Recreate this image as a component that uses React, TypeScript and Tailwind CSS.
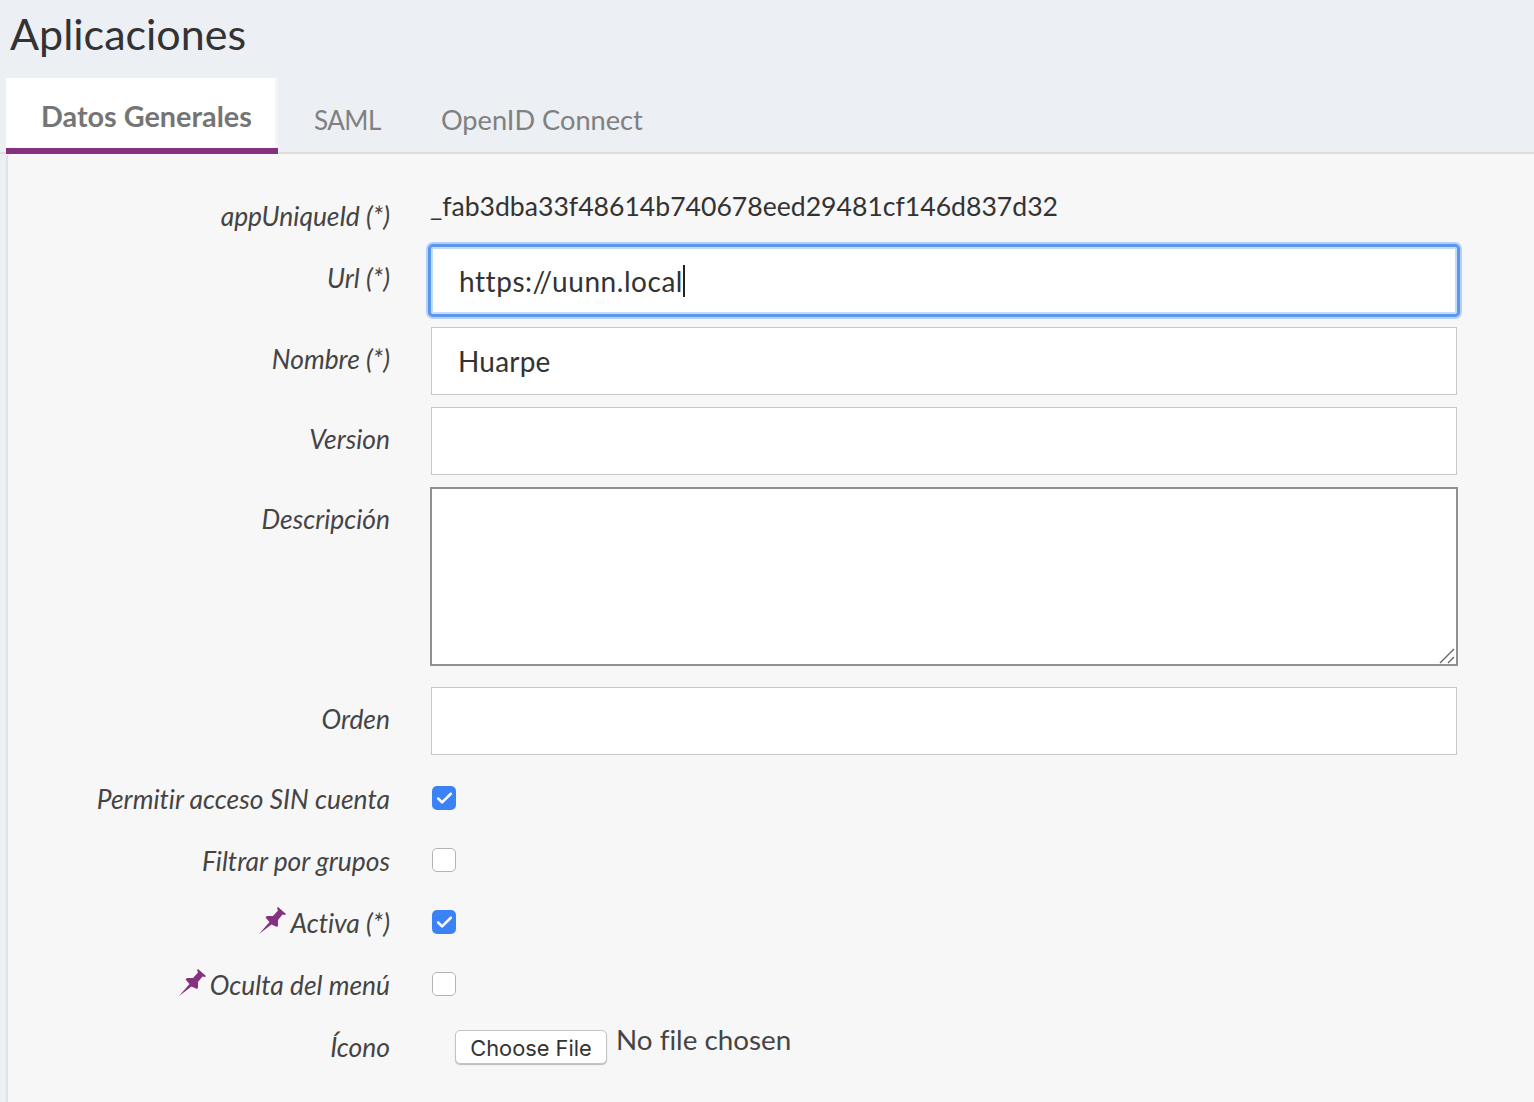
import React from 'react';
import { Check } from 'lucide-react';

const labelClass = "w-[390px] shrink-0 text-right italic text-[26.4px] leading-[32px] text-[#444]";
const inputClass = "w-[1026px] h-[68px] bg-white border border-[#c8c8c8] px-[26px] text-[28px] tracking-[0.2px] text-[#333] outline-none";

const PinIcon = () => (
  <svg viewBox="0 0 27 27" className="w-[27px] h-[27px] mr-[4px] shrink-0" fill="#84317f">
    <path d="M0 27 L10.5 15 L6.5 10.5 L8 9 L14 9 L19 3.5 L18 1 L19 0 L27 7 L26 8 L23.5 7.5 L19 13 L19 18.5 L18 20 L12.5 17.5 Z" />
  </svg>
);

const CheckBox = ({ checked }: { checked: boolean }) => (
  checked ? (
    <div className="w-[24px] h-[24px] rounded-[5px] bg-[#3b82f6] flex items-center justify-center">
      <Check className="w-[19px] h-[19px] text-white" strokeWidth={3.2} />
    </div>
  ) : (
    <div className="w-[24px] h-[24px] rounded-[5px] bg-white border border-[#b4b4b4]" />
  )
);

const Row = ({ label, pin, className, labelTop, children }: { label: string; pin?: boolean; className?: string; labelTop: string; children: React.ReactNode }) => (
  <div className={`flex ${className || ''}`}>
    <div className={`${labelClass} ${labelTop} flex justify-end items-start`}>
      {pin && <PinIcon />}
      <span>{label}</span>
    </div>
    <div className="ml-[41px]">{children}</div>
  </div>
);

export default function App() {
  return (
    <div className="w-[1534px] h-[1102px] overflow-hidden bg-[#eceff4] font-['Lato','Open_Sans',sans-serif] [font-variant-ligatures:none]">
      <h1 className="pl-[10px] pt-[9px] h-[78px] text-[43px] leading-[50px] font-normal text-[#333]">Aplicaciones</h1>

      <div className="flex h-[76px] pl-[6px] border-b-2 border-[#dedede]">
        <div className="w-[272px] h-[76px] bg-white border-b-[6px] border-b-[#84317f] shadow-[inset_-3px_0_0_#f4f5f7] pl-[35px] pt-[20px] text-[28.8px] leading-[36px] font-bold text-[#757575]">
          Datos Generales
        </div>
        <div className="ml-[36px] pt-[24px] text-[26px] tracking-[-0.5px] leading-[36px] text-[#808080]">SAML</div>
        <div className="ml-[60px] pt-[24px] text-[27.2px] leading-[36px] text-[#808080]">OpenID Connect</div>
      </div>

      <div className="ml-[6px] h-[948px] bg-[#f7f7f7] border-l-2 border-[#e2e2e2] rounded-tl-[4px]">
        <div className="-ml-[8px]">
          <Row label="appUniqueId (*)" labelTop="mt-0" className="pt-[46px] h-[93px]">
            <div className="text-[26.6px] leading-[34px] text-[#333] -mt-[11px] -ml-[1px]">_fab3dba33f48614b740678eed29481cf146d837d32</div>
          </Row>

          <Row label="Url (*)" labelTop="mt-[15px]" className="h-[80px]">
            <div className="-ml-[3px] -mt-[3px] w-[1032px] h-[73px] bg-white border-[3px] border-[#5b96ef] rounded-[5px] shadow-[0_0_0_2px_#b5d0f7,inset_0_0_0_2px_#c5dbfa] pl-[28px] text-[28px] tracking-[0.55px] text-[#333] flex items-center">
              <span>https://uunn.local</span>
              <span className="w-[1.5px] h-[32px] bg-[#222]" />
            </div>
          </Row>
          <Row label="Nombre (*)" labelTop="mt-[16px]" className="h-[80px]">
            <input className={inputClass} defaultValue="Huarpe" readOnly />
          </Row>
          <Row label="Version" labelTop="mt-[16px]" className="h-[80px]">
            <input className={inputClass} readOnly />
          </Row>
          <Row label="Descripción" labelTop="mt-[16px]" className="h-[200px]">
            <div className="relative -ml-px w-[1028px] h-[179px]">
              <textarea className="block w-full h-full resize-none bg-white border-2 border-[#8f8f8f] outline-none" readOnly />
              <svg viewBox="0 0 16 16" className="absolute right-[3px] bottom-[2px] w-[16px] h-[16px]" stroke="#666" strokeWidth={1.4} fill="none">
                <path d="M1 15 L15 1 M9 15 L15 9" />
              </svg>
            </div>
          </Row>
          <Row label="Orden" labelTop="mt-[16px]" className="h-[99px]">
            <input className={inputClass} readOnly />
          </Row>
          <Row label="Permitir acceso SIN cuenta" labelTop="-mt-[3px]" className="h-[62px]">
            <div className="pl-px"><CheckBox checked /></div>
          </Row>
          <Row label="Filtrar por grupos" labelTop="-mt-[3px]" className="h-[62px]">
            <div className="pl-px"><CheckBox checked={false} /></div>
          </Row>
          <Row label="Activa (*)" pin labelTop="-mt-[3px]" className="h-[62px]">
            <div className="pl-px"><CheckBox checked /></div>
          </Row>
          <Row label="Oculta del menú" pin labelTop="-mt-[3px]" className="h-[62px]">
            <div className="pl-px"><CheckBox checked={false} /></div>
          </Row>
          <Row label="Ícono" labelTop="-mt-[3px]">
            <div className="flex items-start pl-[24px] -mt-[4px]">
              <div className="w-[152px] h-[34px] bg-white border border-[#c4c4c4] rounded-[5px] shadow-[0_1px_1px_#bbb] text-center text-[21.8px] leading-[34px] text-[#333] font-['Inter',sans-serif]">Choose File</div>
              <span className="ml-[9px] -mt-[7px] text-[27.8px] leading-[34px] text-[#444]">No file chosen</span>
            </div>
          </Row>
        </div>
      </div>
    </div>
  );
}
